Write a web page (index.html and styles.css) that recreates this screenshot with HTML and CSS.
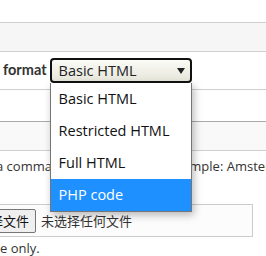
FILE: index.html
```html
<!DOCTYPE html>
<html>
<head>
<meta charset="utf-8">
<link rel="stylesheet" href="styles.css">
</head>
<body>
<div class="page">
  <div class="top"></div>
  <div class="row row-shade"></div>
  <div class="row row-format">
    <span class="label">format</span>
    <div class="select-wrap">
      <div class="select">
        <span class="select-value">Basic HTML</span>
        <span class="select-arrow"></span>
      </div>
      <ul class="dropdown">
        <li class="option">Basic HTML</li>
        <li class="option">Restricted HTML</li>
        <li class="option">Full HTML</li>
        <li class="option option-active">PHP code</li>
      </ul>
    </div>
  </div>
  <div class="row row-plain"></div>
  <div class="row row-light"></div>
  <div class="row row-desc">
    <p class="desc">a comma-separated list. For example: Amsterdam</p>
    <div class="file">
      <span class="file-btn">选择文件</span>
      <span class="file-name">未选择任何文件</span>
    </div>
    <p class="note">e only.</p>
  </div>
</div>
</body>
</html>
```

FILE: styles.css
```css
html, body {
  margin: 0;
  padding: 0;
  background: #fff;
}
.page {
  width: 266px;
  height: 256px;
  overflow: hidden;
  font-family: "Open Sans", "Noto Sans CJK SC", sans-serif;
  color: #333;
}
.top {
  height: 22px;
}
.row {
  border-top: 1px solid #cfcfcf;
}
.row-shade {
  height: 28px;
  background: #f6f6f6;
}
.row-format {
  height: 37px;
  display: flex;
  align-items: flex-start;
  padding-left: 3px;
  gap: 3px;
}
.label {
  font-family: "Lato", "Open Sans", sans-serif;
  font-weight: bold;
  font-size: 14.5px;
  line-height: 20px;
  margin-top: 8px;
  color: #333;
}
.select-wrap {
  position: relative;
  margin-top: 6px;
}
.select {
  box-sizing: border-box;
  width: 142px;
  height: 25px;
  border: 2px solid #111;
  border-radius: 4px;
  background: linear-gradient(#fbfbf7, #e6e6da);
  display: flex;
  align-items: center;
  padding: 0 5px 0 7px;
  font-size: 14.5px;
  color: #222;
}
.select-value {
  flex: 1;
}
.select-arrow {
  width: 0;
  height: 0;
  border-left: 4px solid transparent;
  border-right: 4px solid transparent;
  border-top: 6px solid #222;
}
.dropdown {
  position: absolute;
  left: 0;
  top: 25px;
  box-sizing: border-box;
  width: 142px;
  margin: 0;
  padding: 0;
  list-style: none;
  background: #fff;
  border: 1px solid #767676;
  border-top: none;
  box-shadow: 2px 3px 8px rgba(0, 0, 0, 0.28);
  z-index: 5;
}
.option {
  height: 32px;
  line-height: 32px;
  padding-left: 8px;
  font-size: 14.5px;
  color: #111;
}
.option-active {
  background: #1e90ff;
  color: #fff;
}
.row-plain {
  height: 31px;
}
.row-light {
  height: 28px;
  background: #f9f9f9;
  border-top-color: #aaa;
}
.row-desc {
  padding-top: 6px;
}
.desc {
  margin: 0;
  white-space: nowrap;
  font-size: 13px;
  line-height: 18px;
  text-indent: -4px;
  color: #333;
}
.file {
  margin-top: 29px;
  margin-left: -34px;
  width: 287px;
  height: 33px;
  box-sizing: border-box;
  border: 1px solid #ccc;
  background: #fcfcfc;
  display: flex;
  align-items: center;
  gap: 5px;
  padding-left: 3px;
}
.file-btn {
  box-sizing: border-box;
  height: 24px;
  border: 1px solid #767676;
  border-radius: 2px;
  background: #efefef;
  font-size: 13px;
  line-height: 22px;
  padding: 0 6px;
  color: #111;
}
.file-name {
  font-size: 13px;
  color: #333;
}
.note {
  margin: 2px 0 0;
  font-size: 13px;
  line-height: 18px;
  white-space: nowrap;
  color: #333;
}
```
